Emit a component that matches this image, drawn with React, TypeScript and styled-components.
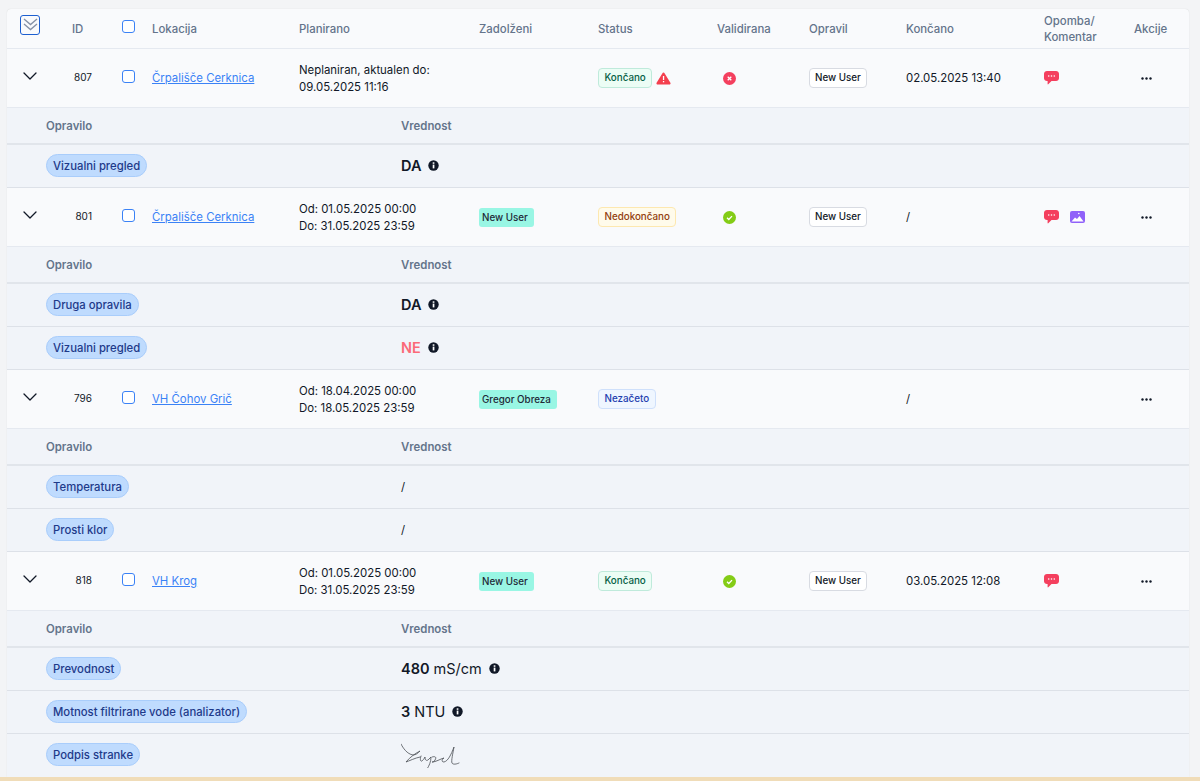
import React from 'react';
import styled, { createGlobalStyle } from 'styled-components';

const GlobalStyle = createGlobalStyle`
  html, body {
    margin: 0;
    padding: 0;
    height: 100%;
    overflow: hidden;
    background: #f3f4f6;
    font-family: Inter, "Liberation Sans", sans-serif;
    -webkit-font-smoothing: antialiased;
  }
`;

const COLUMNS = '65px 50px 30px 147px 180px 119px 119px 92px 97px 138px 90px 55px';

const Page = styled.div`
  height: 781px;
  box-sizing: border-box;
  padding: 9px 11px 0 7px;
  background: #f3f4f6;
  position: relative;
  overflow: hidden;
`;

const Card = styled.div`
  background: #f9fafc;
  border-radius: 4px 4px 0 0;
  box-shadow: 0 0 1px rgba(0, 0, 0, 0.16);
`;

const HeaderRow = styled.div`
  display: grid;
  grid-template-columns: ${COLUMNS};
  height: 39px;
  align-items: center;
  border-bottom: 1px solid #e5e9f0;
`;

const HeaderCell = styled.div`
  font-size: 11.4px;
  font-weight: 500;
  line-height: 16px;
  color: #64748b;
`;

const ExpandAllCell = styled.div`
  padding-left: 13px;
  display: flex;
  margin-bottom: 8px;
`;

const ExpandAllButton = styled.div`
  width: 20px;
  height: 20px;
  box-sizing: border-box;
  border: 1.5px solid #1d5fd0;
  border-radius: 3px;
  display: flex;
  align-items: center;
  justify-content: center;
  color: #8792a6;
`;

const MainRow = styled.div`
  display: grid;
  grid-template-columns: ${COLUMNS};
  height: 58px;
  align-items: center;
  border-bottom: 1px solid #e5e9f0;
  font-size: 11.4px;
  line-height: 17px;
  color: #111827;
`;

const ChevronCell = styled.div`
  padding-left: 15px;
  display: flex;
  color: #111827;
  margin-bottom: 4px;
`;

const IdCell = styled.div`
  font-size: 10px;
  text-align: right;
  padding-right: 30px;
  margin-bottom: 2px;
`;

const CheckCell = styled.div`
  display: flex;
  margin-bottom: 4px;
`;

const CheckBox = styled.span`
  width: 13px;
  height: 13px;
  box-sizing: border-box;
  border: 1px solid #3b82f6;
  border-radius: 3px;
  background: #fff;
  display: block;
`;

const LocationLink = styled.a`
  color: #3b82f6;
  text-decoration: underline;
  cursor: pointer;
`;

const PlannedCell = styled.div`
  padding-top: 2px;
`;

const Tag = styled.span`
  display: inline-block;
  background: #99f6e4;
  border-radius: 3px;
  color: #1f2937;
  font-size: 9.8px;
  font-weight: 500;
  line-height: 19px;
  padding: 0 6px 0 3px;
`;

const tones = {
  green: { bg: '#ecfdf5', border: '#bfeadb', color: '#065f46' },
  yellow: { bg: '#fffbeb', border: '#fde8b0', color: '#92400e' },
  blue: { bg: '#eff6ff', border: '#cfe0fb', color: '#1e40af' },
};

const StatusBadge = styled.span<{ $tone: keyof typeof tones }>`
  display: inline-block;
  background: ${(p) => tones[p.$tone].bg};
  border: 1px solid ${(p) => tones[p.$tone].border};
  color: ${(p) => tones[p.$tone].color};
  border-radius: 4px;
  font-size: 9.8px;
  font-weight: 500;
  line-height: 18px;
  padding: 0 5.500px;
`;

const UserBadge = styled.span`
  display: inline-block;
  background: #fff;
  border: 1px solid #d8dbe2;
  border-radius: 4px;
  color: #111827;
  font-size: 9.8px;
  font-weight: 500;
  line-height: 18px;
  padding: 0 5px;
`;

const StatusCell = styled.div`
  display: flex;
  align-items: center;
  gap: 4px;
`;

const ValidCell = styled.div`
  display: flex;
  padding-left: 6px;
`;

const IconsCell = styled.div`
  display: flex;
  align-items: center;
  gap: 11px;
`;

const ActionsCell = styled.div`
  padding-left: 7px;
  display: flex;
`;

const SubHeader = styled.div`
  display: grid;
  grid-template-columns: 355px 1fr;
  height: 35px;
  padding-left: 39px;
  align-items: center;
  background: #f1f4f9;
  border-bottom: 2px solid #e1e5eb;
  font-size: 11.4px;
  font-weight: 600;
  color: #64748b;
`;

const SubRow = styled.div<{ $last?: boolean }>`
  display: grid;
  grid-template-columns: 355px 1fr;
  height: 41px;
  padding: 0 0 1px 39px;
  align-items: center;
  background: #f1f4f9;
  border-bottom: 1px solid ${(p) => (p.$last ? 'transparent' : '#dde1e8')};
`;

const TaskPill = styled.span`
  justify-self: start;
  background: #bfdbfe;
  border: 1px solid #a9cdfb;
  border-radius: 12px;
  color: #1e3a8a;
  font-size: 11.3px;
  font-weight: 500;
  line-height: 20px;
  padding: 1px 6px 0;
`;

const Value = styled.div<{ $danger?: boolean }>`
  display: flex;
  align-items: center;
  gap: 7px;
  font-size: 14.5px;
  color: ${(p) => (p.$danger ? '#fb6a78' : '#111827')};

  b {
    font-weight: 600;
  }
`;

const PlainValue = styled.div`
  font-size: 11.4px;
  color: #111827;
`;

const BottomStrip = styled.div`
  position: absolute;
  left: 0;
  right: 0;
  bottom: 0;
  height: 4px;
  background: #f0dcb8;
`;

const Chevron = () => (
  <svg width="16" height="10" viewBox="0 0 16 10" fill="none" stroke="currentColor" strokeWidth="1.3" strokeLinecap="round" strokeLinejoin="round">
    <path d="M2 2l6 6 6-6" />
  </svg>
);

const DoubleChevron = () => (
  <svg width="15" height="15" viewBox="0 0 15 15" fill="none" stroke="currentColor" strokeWidth="1.4">
    <path d="M1 2l6.500 5.500L14 2" />
    <path d="M1 7l6.500 5.500L14 7" />
  </svg>
);

const InfoIcon = () => (
  <svg width="11" height="11" viewBox="0 0 11 11">
    <circle cx="5.500" cy="5.500" r="5.200" fill="#111827" />
    <rect x="4.700" y="4.600" width="1.700" height="3.800" fill="#fff" />
    <rect x="4.700" y="2.300" width="1.700" height="1.500" fill="#fff" />
  </svg>
);

const WarningIcon = () => (
  <svg width="15" height="13" viewBox="0 0 15 13">
    <path d="M7.500.6c.5 0 .9.3 1.200.8l5.700 9.400c.5.9-.1 1.800-1.100 1.800H1.700c-1 0-1.600-.9-1.100-1.800l5.700-9.400c.3-.5.7-.8 1.200-.8z" fill="#f43f4e" />
    <rect x="6.900" y="4" width="1.300" height="4" fill="#fff" />
    <rect x="6.900" y="9" width="1.300" height="1.300" fill="#fff" />
  </svg>
);

const XCircle = () => (
  <svg width="13" height="13" viewBox="0 0 13 13">
    <circle cx="6.500" cy="6.500" r="6.500" fill="#f43f5e" />
    <path d="M4.700 4.700l3.600 3.600M8.300 4.700l-3.600 3.600" stroke="#fff" strokeWidth="1.300" />
  </svg>
);

const CheckCircle = () => (
  <svg width="13" height="13" viewBox="0 0 13 13">
    <circle cx="6.500" cy="6.500" r="6.500" fill="#84cc16" />
    <path d="M4 6.700l1.800 1.800 3.200-3.400" fill="none" stroke="#fff" strokeWidth="1.300" />
  </svg>
);

const CommentIcon = () => (
  <svg width="15" height="14" viewBox="0 0 15 14">
    <path d="M3 0h9c1.700 0 3 1.200 3 2.800v4.400C15 8.800 13.700 10 12 10H7.500L4.300 13.300c-.3.300-.7.100-.7-.3V10H3C1.300 10 0 8.800 0 7.200V2.800C0 1.200 1.300 0 3 0z" fill="#f43f5e" />
    <circle cx="4.700" cy="5" r=".8" fill="#fff" />
    <circle cx="7.500" cy="5" r=".8" fill="#fff" />
    <circle cx="10.300" cy="5" r=".8" fill="#fff" />
  </svg>
);

const ImageIcon = () => (
  <svg width="15" height="12" viewBox="0 0 15 12">
    <rect width="15" height="12" rx="2" fill="#9061f9" />
    <circle cx="8.800" cy="2.500" r=".8" fill="#fff" />
    <path d="M1.500 10.500l3.500-4 2 1.500 2.500-3 4 5.500z" fill="#fff" />
  </svg>
);

const Dots = () => (
  <svg width="11" height="3" viewBox="0 0 11 3" fill="#111827">
    <circle cx="1.500" cy="1.500" r="1.200" />
    <circle cx="5.500" cy="1.500" r="1.200" />
    <circle cx="9.500" cy="1.500" r="1.200" />
  </svg>
);

const Signature = () => (
  <svg width="60" height="26" viewBox="11 7 60 26" fill="none" stroke="#4b4f56" strokeWidth="0.8" strokeLinecap="round" strokeLinejoin="round">
    <path d="M11 9C13 13 17 19 23 20C26 20 28 18 30 16C26 18 20 22 16 27C19 26 25 23 30 22" />
    <path d="M31 21C30 23 30 27 32 26C33 25 34 24 35 22C35 25 36 26 38 25C39 24 40 23 41 22C41 27 39 31 37 34" />
    <path d="M42 22C45 21 47 22 45 25C44 27 43 27 42 27C46 27 50 24 54 23C52 24 51 27 54 27C58 26 61 20 64 12C63 18 61 26 62 28C63 30 67 29 69 28" />
  </svg>
);

type Sub = { task: string; value: React.ReactNode };

type Rec = {
  id: number;
  location: string;
  planned: [string, string];
  assignee?: string;
  status: string;
  tone: keyof typeof tones;
  warning?: boolean;
  valid?: 'yes' | 'no';
  doneBy?: string;
  finished: string;
  comment?: boolean;
  image?: boolean;
  subs: Sub[];
};

const records: Rec[] = [
  {
    id: 807,
    location: 'Črpališče Cerknica',
    planned: ['Neplaniran, aktualen do:', '09.05.2025 11:16'],
    status: 'Končano',
    tone: 'green',
    warning: true,
    valid: 'no',
    doneBy: 'New User',
    finished: '02.05.2025 13:40',
    comment: true,
    subs: [{ task: 'Vizualni pregled', value: <Value><b>DA</b><InfoIcon /></Value> }],
  },
  {
    id: 801,
    location: 'Črpališče Cerknica',
    planned: ['Od: 01.05.2025 00:00', 'Do: 31.05.2025 23:59'],
    assignee: 'New User',
    status: 'Nedokončano',
    tone: 'yellow',
    valid: 'yes',
    doneBy: 'New User',
    finished: '/',
    comment: true,
    image: true,
    subs: [
      { task: 'Druga opravila', value: <Value><b>DA</b><InfoIcon /></Value> },
      { task: 'Vizualni pregled', value: <Value $danger><b>NE</b><InfoIcon /></Value> },
    ],
  },
  {
    id: 796,
    location: 'VH Čohov Grič',
    planned: ['Od: 18.04.2025 00:00', 'Do: 18.05.2025 23:59'],
    assignee: 'Gregor Obreza',
    status: 'Nezačeto',
    tone: 'blue',
    finished: '/',
    subs: [
      { task: 'Temperatura', value: <PlainValue>/</PlainValue> },
      { task: 'Prosti klor', value: <PlainValue>/</PlainValue> },
    ],
  },
  {
    id: 818,
    location: 'VH Krog',
    planned: ['Od: 01.05.2025 00:00', 'Do: 31.05.2025 23:59'],
    assignee: 'New User',
    status: 'Končano',
    tone: 'green',
    valid: 'yes',
    doneBy: 'New User',
    finished: '03.05.2025 12:08',
    comment: true,
    subs: [
      { task: 'Prevodnost', value: <Value><span><b>480</b> mS/cm</span><InfoIcon /></Value> },
      { task: 'Motnost filtrirane vode (analizator)', value: <Value><span><b>3</b> NTU</span><InfoIcon /></Value> },
      { task: 'Podpis stranke', value: <Signature /> },
    ],
  },
];

export default function App() {
  return (
    <Page>
      <GlobalStyle />
      <Card>
        <HeaderRow>
          <ExpandAllCell>
            <ExpandAllButton>
              <DoubleChevron />
            </ExpandAllButton>
          </ExpandAllCell>
          <HeaderCell>ID</HeaderCell>
          <CheckCell>
            <CheckBox />
          </CheckCell>
          <HeaderCell>Lokacija</HeaderCell>
          <HeaderCell>Planirano</HeaderCell>
          <HeaderCell>Zadolženi</HeaderCell>
          <HeaderCell>Status</HeaderCell>
          <HeaderCell>Validirana</HeaderCell>
          <HeaderCell>Opravil</HeaderCell>
          <HeaderCell>Končano</HeaderCell>
          <HeaderCell>
            Opomba/
            <br />
            Komentar
          </HeaderCell>
          <HeaderCell>Akcije</HeaderCell>
        </HeaderRow>
        {records.map((r, i) => (
          <React.Fragment key={r.id}>
            <MainRow>
              <ChevronCell>
                <Chevron />
              </ChevronCell>
              <IdCell>{r.id}</IdCell>
              <CheckCell>
                <CheckBox />
              </CheckCell>
              <div>
                <LocationLink>{r.location}</LocationLink>
              </div>
              <PlannedCell>
                {r.planned[0]}
                <br />
                {r.planned[1]}
              </PlannedCell>
              <div>{r.assignee && <Tag>{r.assignee}</Tag>}</div>
              <StatusCell>
                <StatusBadge $tone={r.tone}>{r.status}</StatusBadge>
                {r.warning && <WarningIcon />}
              </StatusCell>
              <ValidCell>
                {r.valid === 'no' && <XCircle />}
                {r.valid === 'yes' && <CheckCircle />}
              </ValidCell>
              <div>{r.doneBy && <UserBadge>{r.doneBy}</UserBadge>}</div>
              <div>{r.finished}</div>
              <IconsCell>
                {r.comment && <CommentIcon />}
                {r.image && <ImageIcon />}
              </IconsCell>
              <ActionsCell>
                <Dots />
              </ActionsCell>
            </MainRow>
            <SubHeader>
              <span>Opravilo</span>
              <span>Vrednost</span>
            </SubHeader>
            {r.subs.map((s, j) => (
              <SubRow key={s.task} $last={i === records.length - 1 && j === r.subs.length - 1}>
                <TaskPill>{s.task}</TaskPill>
                {s.value}
              </SubRow>
            ))}
          </React.Fragment>
        ))}
      </Card>
      <BottomStrip />
    </Page>
  );
}
